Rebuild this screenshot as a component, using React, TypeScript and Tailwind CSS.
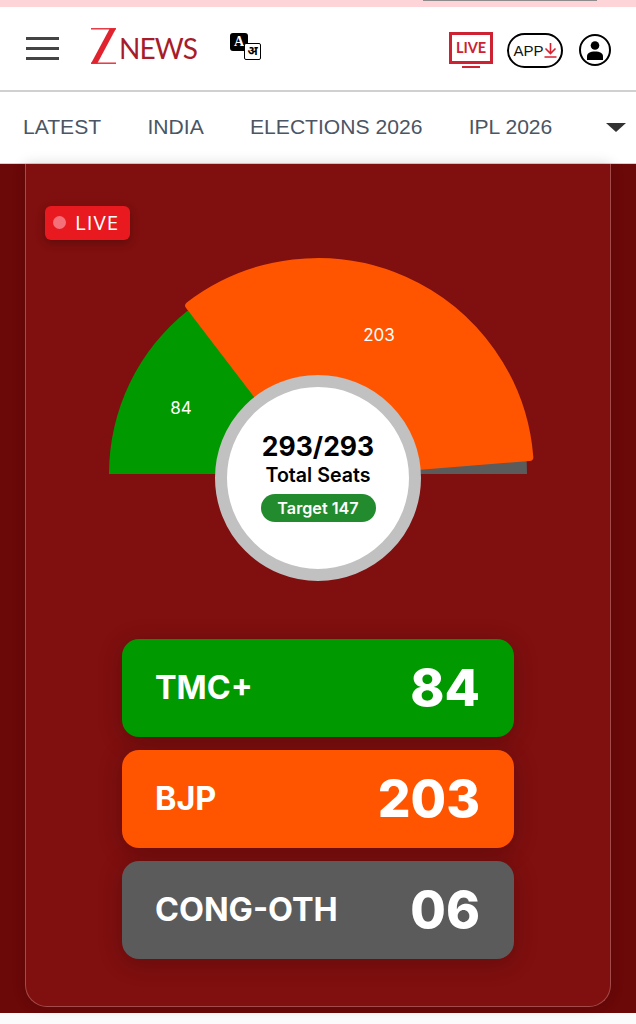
import React from "react";

const inter = { fontFamily: "Inter, 'Liberation Sans', sans-serif" };

function pt(r: number, deg: number, cx = 318, cy = 474) {
  const a = (deg * Math.PI) / 180;
  return [cx + r * Math.cos(a), cy - r * Math.sin(a)];
}

function wedge(r: number, a1: number, a2: number, cx = 318, cy = 474) {
  const [x1, y1] = pt(r, a1, cx, cy);
  const [x2, y2] = pt(r, a2, cx, cy);
  return `M${cx} ${cy} L${x1} ${y1} A${r} ${r} 0 0 1 ${x2} ${y2} Z`;
}

function Gauge() {
  return (
    <div className="relative h-[399px] w-full">
      <svg viewBox="26 240 584 399" className="block h-[399px] w-[584px]">
        <path d={wedge(209, 180, 128.4)} fill="#009900" />
        <path d={wedge(209, 3.7, 0)} fill="#5b5b5b" />
        <path
          d={wedge(212, 127.4, 4.6)}
          fill="#ff5500"
          stroke="#ff5500"
          strokeWidth="8"
          strokeLinejoin="round"
        />
        <text x="181" y="414" textAnchor="middle" fontSize="17" fill="#fff" style={inter}>84</text>
        <text x="379" y="341" textAnchor="middle" fontSize="17" fill="#fff" style={inter}>203</text>
      </svg>
      <div
        className="absolute left-[189px] top-[135px] flex h-[206px] w-[206px] flex-col items-center rounded-full border-[12px] border-[#c1c1c1] bg-white pt-[43px] text-black"
        style={inter}
      >
        <div className="text-[26.5px] font-bold leading-[32px]">293/293</div>
        <div className="text-[19.6px] font-semibold leading-[26px]">Total Seats</div>
        <div className="mt-[6px] flex h-[28px] w-[115px] items-center justify-center rounded-full bg-[#228b2e] text-[16.2px] font-semibold text-white">
          Target 147
        </div>
      </div>
    </div>
  );
}

function Row({ label, value, color }: { label: string; value: string; color: string }) {
  return (
    <div
      className={`flex h-[98px] w-[392px] items-center justify-between rounded-[17px] pl-[33px] pr-[34px] text-white shadow-[0_4px_24px_rgba(0,0,0,0.22)] ${color}`}
      style={inter}
    >
      <span className="text-[32.4px] font-bold">{label}</span>
      <span className="text-[51.5px] font-extrabold leading-none">{value}</span>
    </div>
  );
}

function Logo() {
  return (
    <div className="flex items-start">
      <svg width="28" height="40" viewBox="0 0 28 40" className="block">
        <rect x="0" y="0" width="28" height="1.5" fill="#e0232e" />
        <rect x="0" y="38.5" width="28" height="1.5" fill="#e0232e" />
        <polygon points="21,0.5 28,0.5 7,39.5 0,39.5" fill="#e0232e" />
      </svg>
      <span
        className="ml-[3px] mt-[5px] text-[28px] leading-[34px] tracking-[-0.9px] text-[#a81c2a]"
        style={{ fontFamily: "Lato, sans-serif" }}
      >
        NEWS
      </span>
    </div>
  );
}

function LangIcon() {
  return (
    <div className="relative h-[27px] w-[31px]">
      <div className="absolute left-0 top-0 flex h-[18px] w-[18px] items-center justify-center rounded-[3px] bg-black text-[14px] font-bold text-white" style={{ fontFamily: "'Liberation Serif', serif" }}>
        A
      </div>
      <div className="absolute left-[14px] top-[10px] flex h-[17px] w-[17px] items-center justify-center rounded-[2px] border-[1.5px] border-black bg-white text-[12px] font-bold leading-none text-black" style={{ fontFamily: "'Noto Sans', 'DejaVu Sans', sans-serif" }}>
        अ
      </div>
    </div>
  );
}

function LiveTv() {
  return (
    <div className="flex flex-col items-center">
      <div className="flex h-[32px] w-[44px] items-center justify-center border-[3px] border-[#cc2231] text-[14.5px] font-bold leading-none text-[#cc2231]" style={{ fontFamily: "Lato, sans-serif" }}>
        LIVE
      </div>
      <div className="mt-[2px] h-[2px] w-[18px] bg-[#cc2231]" />
    </div>
  );
}

function AppPill() {
  return (
    <div className="flex h-[35px] w-[56px] items-center justify-center rounded-full border-2 border-black pr-[2px]">
      <span className="text-[15px] leading-none text-[#111]" style={{ fontFamily: "'Liberation Sans', sans-serif" }}>APP</span>
      <svg width="13" height="16" viewBox="0 0 13 16" fill="none" stroke="#d81f2e" strokeWidth="1.6" className="-mr-[2px]">
        <path d="M6.5 1V11.5M1.5 6.5L6.5 11.5L11.5 6.5M0.5 15H12.5" />
      </svg>
    </div>
  );
}

function UserIcon() {
  return (
    <svg width="32" height="32" viewBox="0 0 32 32" className="block">
      <circle cx="16" cy="16" r="15" fill="#fff" stroke="#000" strokeWidth="2" />
      <circle cx="16" cy="11.5" r="4.3" fill="#000" />
      <path d="M8 26V22.5C8 19 11 17.5 16 17.5S24 19 24 22.5V26Z" fill="#000" />
    </svg>
  );
}

export default function App() {
  return (
    <div className="flex min-h-[1024px] w-[636px] flex-col overflow-hidden bg-[#fbfbfb]">
      <div className="flex h-[7px] justify-end bg-[#fdd5d8] pr-[39px]">
        <div className="h-px w-[174px] bg-[#8f8a8b]" />
      </div>

      <header className="flex h-[85px] items-center border-b-2 border-[#d0d0d0] bg-white pl-[26px] pr-[25px]">
        <div className="flex w-[33px] flex-col gap-[7px]">
          <span className="h-[3px] bg-[#444]" />
          <span className="h-[3px] bg-[#444]" />
          <span className="h-[3px] bg-[#444]" />
        </div>
        <div className="ml-[32px] -mt-[5px] w-[106px]">
          <Logo />
        </div>
        <div className="ml-[33px] -mt-[5px]">
          <LangIcon />
        </div>
        <div className="ml-auto flex items-center pt-[3px]">
          <LiveTv />
          <div className="ml-[14px]">
            <AppPill />
          </div>
          <div className="ml-[16px]">
            <UserIcon />
          </div>
        </div>
      </header>

      <nav
        className="flex h-[72px] items-center gap-[46.3px] border-b border-[#d8d0d0] bg-white pb-[1px] pl-[23px] text-[21.1px] text-[#4b5563]"
        style={{ fontFamily: "'Liberation Sans', sans-serif" }}
      >
        <span>LATEST</span>
        <span>INDIA</span>
        <span>ELECTIONS 2026</span>
        <span>IPL 2026</span>
        <span className="ml-[7px] h-0 w-0 border-x-[10px] border-t-[9px] border-x-transparent border-t-[#333]" />
      </nav>

      <main className="h-[849px] bg-[#6b0808] pl-[25px] pr-[25px]">
        <section className="flex h-[843px] w-[586px] flex-col rounded-b-[22px] border-x-[1.5px] border-b-[1.5px] border-[#a54a4a] bg-[#800f0f] shadow-[0_0_14px_rgba(0,0,0,0.15)]">
          <div className="pl-[19px] pt-[42px]">
            <div
              className="flex h-[34px] w-[85px] items-center gap-[9px] rounded-[6px] bg-[#e8191f] pb-[1px] pl-[8px] text-[20.5px] tracking-[1px] text-white shadow-[0_3px_10px_rgba(0,0,0,0.25)]"
              style={{ fontFamily: "'Open Sans', sans-serif" }}
            >
              <span className="h-[13px] w-[13px] rounded-full bg-[#f4717a]" />
              LIVE
            </div>
          </div>
          <Gauge />
          <div className="flex flex-col items-center gap-[13px]">
            <Row label="TMC+" value="84" color="bg-[#009900]" />
            <Row label="BJP" value="203" color="bg-[#ff5500]" />
            <Row label="CONG-OTH" value="06" color="bg-[#5b5b5b]" />
          </div>
        </section>
      </main>
    </div>
  );
}
